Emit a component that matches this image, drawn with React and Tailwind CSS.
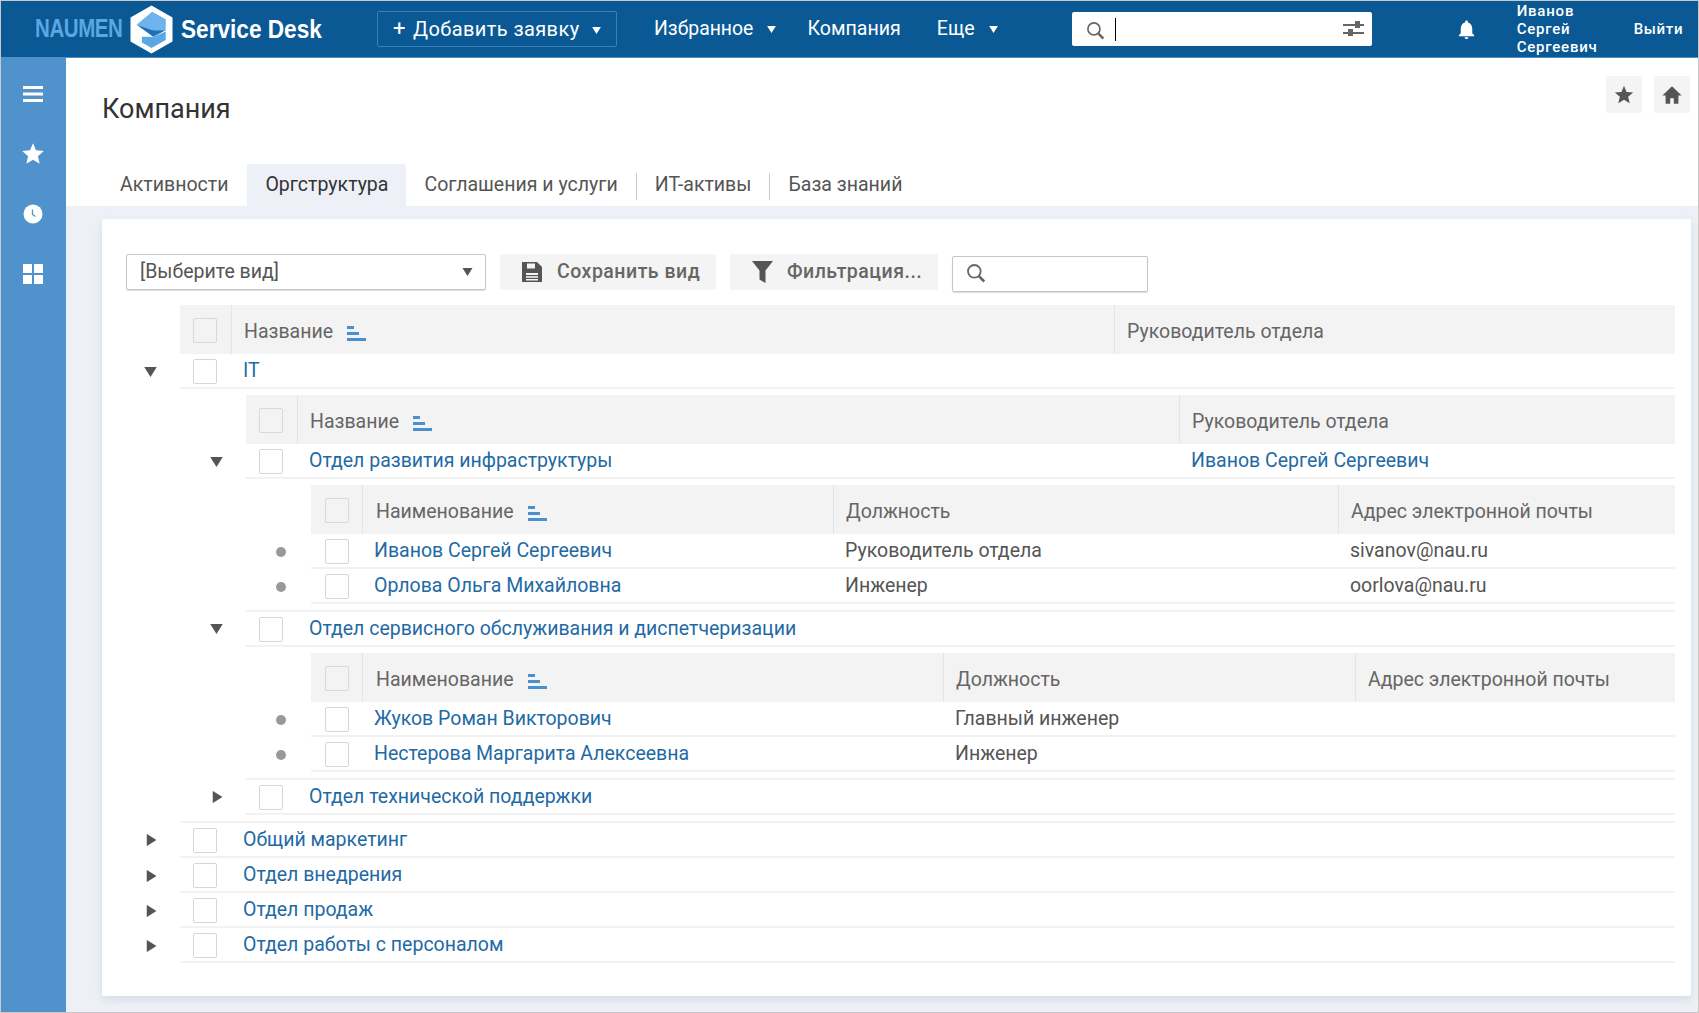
import React from 'react'

const StarIcon = ({ className }) => (
  <svg viewBox="0 0 24 24" className={className} fill="currentColor">
    <path d="M12 17.27 18.18 21l-1.64-7.03L22 9.24l-7.19-.61L12 2 9.19 8.63 2 9.24l5.46 4.73L5.82 21z" />
  </svg>
)

const SearchIcon = ({ className }) => (
  <svg viewBox="0 0 18 18" className={className} fill="none" stroke="#666" strokeWidth="1.6">
    <circle cx="7.5" cy="7.5" r="5.7" />
    <path d="M11.6 11.8 16.4 16.6" strokeWidth="2.4" />
  </svg>
)

const Caret = ({ className }) => (
  <svg viewBox="0 0 10 8" className={className} fill="currentColor">
    <path d="M0 0h10L5 8z" />
  </svg>
)

const Logo = () => (
  <svg viewBox="30 12 130 148" className="w-[43px] h-[49px] shrink-0">
    <polygon points="95,16 156,51 156,121 95,156 34,121 34,51" fill="#fff" stroke="#fff" strokeWidth="5" strokeLinejoin="round" />
    <polygon points="50,72 97,32 138,55 138,88 100,88" fill="#6db3ec" />
    <polygon points="50,72 100,88 138,88 100,108" fill="#1c70b8" />
    <polygon points="66,108 100,108 138,92 138,118 95,142 66,125" fill="#5ba7e4" />
  </svg>
)

const SortIcon = () => (
  <span className="flex flex-col gap-[3px] w-[19px] ml-[14px] mt-[3px] shrink-0">
    <span className="block h-[3px] w-[7px] bg-[#4a90d0]"></span>
    <span className="block h-[3px] w-[12px] bg-[#4a90d0]"></span>
    <span className="block h-[3px] w-[19px] bg-[#4a90d0]"></span>
  </span>
)

const Checkbox = () => (
  <span className="block w-[24px] h-[25px] rounded-[2px] border border-[#d6d6d6] bg-white"></span>
)

const HeaderCheckbox = () => (
  <span className="block w-[24px] h-[25px] rounded-[2px] border border-[#d9d9d9] bg-[#f3f3f3]"></span>
)

const Link = ({ children }) => <span className="text-[#1f6aa5] whitespace-nowrap">{children}</span>

const TableHead = ({ cols, deep }) => (
  <div className="flex h-[49px] bg-[#f3f3f3] text-[#666]">
    <div className={deep ? 'w-[51px] shrink-0 pl-[14px] pt-[13px]' : 'w-[51px] shrink-0 pl-[13px] pt-[13px]'}>
      <HeaderCheckbox />
    </div>
    {cols.map((c, i) => (
      <div key={c.label} className={`${c.w} flex items-center pl-[12px] pt-[4px] border-l border-[#e4e4e4]`}>
        <span className={deep && i === 0 ? 'whitespace-nowrap ml-[1px]' : 'whitespace-nowrap'}>{c.label}</span>
        {i === 0 && <SortIcon />}
      </div>
    ))}
  </div>
)

const Row = ({ icon, cols, cells, top, deep, gutter = 'w-[66px]' }) => (
  <div className="flex">
    <div className={`${gutter} shrink-0 pl-[30px] flex items-center`}>
      {icon === 'open' && <Caret className="w-[13px] h-[10px] text-[#555]" />}
      {icon === 'closed' && <Caret className="w-[13px] h-[10px] ml-[1px] text-[#555] -rotate-90" />}
      {icon === 'dot' && (
        <span className="w-[12px] -ml-[1px] flex justify-center">
          <span className="block w-[10px] h-[10px] rounded-full bg-[#999]"></span>
        </span>
      )}
    </div>
    <div className={top ? 'flex-1 flex h-[37px] border-t-2 border-b-2 border-[#f2f2f2]' : 'flex-1 flex h-[35px] border-b-2 border-[#f2f2f2]'}>
      <div className={deep ? 'w-[51px] shrink-0 pl-[14px] pt-[5px]' : 'w-[51px] shrink-0 pl-[13px] pt-[5px]'}>
        <Checkbox />
      </div>
      {cols.map((c, i) => (
        <div key={c.label} className={`${c.w} flex items-center pl-[12px] pt-[1px] text-[#555]`}>
          {cells[i]}
        </div>
      ))}
    </div>
  </div>
)

const rootCols = [
  { label: 'Название', w: 'w-[883px]' },
  { label: 'Руководитель отдела', w: 'flex-1' },
]
const midCols = [
  { label: 'Название', w: 'w-[882px]' },
  { label: 'Руководитель отдела', w: 'flex-1' },
]
const staffColsA = [
  { label: 'Наименование', w: 'w-[471px]' },
  { label: 'Должность', w: 'w-[505px]' },
  { label: 'Адрес электронной почты', w: 'flex-1' },
]
const staffColsB = [
  { label: 'Наименование', w: 'w-[581px]' },
  { label: 'Должность', w: 'w-[412px]' },
  { label: 'Адрес электронной почты', w: 'flex-1' },
]

const Staff = ({ cols, rows }) => (
  <div className="flex pt-[6px] pb-[6px]">
    <div className="w-[66px] shrink-0"></div>
    <div className="flex-1 min-w-0">
      <div className="ml-[65px]">
        <TableHead deep cols={cols} />
      </div>
      {rows.map((r) => (
        <Row key={r[0]} deep gutter="w-[65px]" icon="dot" cols={cols} cells={[<Link>{r[0]}</Link>, r[1], r[2]]} />
      ))}
    </div>
  </div>
)

const OrgTree = () => (
  <div className="text-[19.5px]">
    <div className="ml-[66px]">
      <TableHead cols={rootCols} />
    </div>
    <Row icon="open" cols={rootCols} cells={[<Link>IT</Link>, '']} />
    <div className="flex pt-[6px] pb-[6px]">
      <div className="w-[66px] shrink-0"></div>
      <div className="flex-1 min-w-0">
        <div className="ml-[66px]">
          <TableHead cols={midCols} />
        </div>
        <Row
          icon="open"
          cols={midCols}
          cells={[<Link>Отдел развития инфраструктуры</Link>, <Link>Иванов Сергей Сергеевич</Link>]}
        />
        <Staff
          cols={staffColsA}
          rows={[
            ['Иванов Сергей Сергеевич', 'Руководитель отдела', 'sivanov@nau.ru'],
            ['Орлова Ольга Михайловна', 'Инженер', 'oorlova@nau.ru'],
          ]}
        />
        <Row top icon="open" cols={midCols} cells={[<Link>Отдел сервисного обслуживания и диспетчеризации</Link>, '']} />
        <Staff
          cols={staffColsB}
          rows={[
            ['Жуков Роман Викторович', 'Главный инженер', ''],
            ['Нестерова Маргарита Алексеевна', 'Инженер', ''],
          ]}
        />
        <Row top icon="closed" cols={midCols} cells={[<Link>Отдел технической поддержки</Link>, '']} />
      </div>
    </div>
    <Row top icon="closed" cols={rootCols} cells={[<Link>Общий маркетинг</Link>, '']} />
    <Row icon="closed" cols={rootCols} cells={[<Link>Отдел внедрения</Link>, '']} />
    <Row icon="closed" cols={rootCols} cells={[<Link>Отдел продаж</Link>, '']} />
    <Row icon="closed" cols={rootCols} cells={[<Link>Отдел работы с персоналом</Link>, '']} />
  </div>
)

const Header = () => (
  <header className="h-[57px] shrink-0 bg-[#0a5995] border-b border-[#4a92cc] flex items-center text-white">
    <div className="w-[111px] pl-[34px] shrink-0 whitespace-nowrap">
      <span className="block origin-left scale-x-[0.82] text-[#5ba7e0] text-[25px] font-bold tracking-[-0.5px]" style={{ fontFamily: '"Liberation Sans", sans-serif' }}>
        NAUMEN
      </span>
    </div>
    <div className="ml-[18px]">
      <Logo />
    </div>
    <div className="w-[142px] ml-[8px] shrink-0 whitespace-nowrap">
      <span className="block origin-left scale-x-[0.87] text-[26px] font-bold" style={{ fontFamily: '"Liberation Sans", sans-serif' }}>
        Service Desk
      </span>
    </div>
    <button className="ml-[54px] w-[240px] h-[36px] shrink-0 flex items-center pl-[15px] border border-[#3a80bb] rounded-[2px] text-[20px] tracking-[0.4px]">
      <span className="w-[20px] text-left text-[22px] leading-none">+</span>
      <span className="whitespace-nowrap -mt-[1px]">Добавить заявку</span>
      <Caret className="w-[9px] h-[7px] ml-[12px] mt-[2px]" />
    </button>
    <span className="ml-[37px] text-[19.4px] whitespace-nowrap">Избранное</span>
    <Caret className="w-[9px] h-[7px] ml-[14px] shrink-0" />
    <span className="ml-[31px] text-[19.6px] whitespace-nowrap">Компания</span>
    <span className="ml-[36px] text-[19.6px] whitespace-nowrap">Еще</span>
    <Caret className="w-[9px] h-[7px] ml-[14px] shrink-0" />
    <div className="ml-[74px] w-[300px] h-[34px] shrink-0 bg-white rounded-[2px] flex items-center pl-[14px] pr-[8px]">
      <SearchIcon className="w-[19px] h-[19px] mt-[3px] shrink-0" />
      <span className="block w-px h-[23px] bg-black ml-[10px]"></span>
      <svg viewBox="0 0 21 16" className="w-[21px] h-[16px] ml-auto" fill="#666">
        <rect x="0" y="3" width="21" height="2" />
        <rect x="12" y="0" width="5" height="7" />
        <rect x="0" y="11" width="21" height="2" />
        <rect x="5" y="8" width="5" height="7" />
      </svg>
    </div>
    <svg viewBox="0 0 24 24" className="w-[23px] h-[25px] ml-[83px] shrink-0" fill="currentColor">
      <path d="M12 22c1.1 0 2-.9 2-2h-4c0 1.1.9 2 2 2zm6-6v-5c0-3.07-1.64-5.64-4.5-6.32V4c0-.83-.67-1.5-1.5-1.5s-1.5.67-1.5 1.5v.68C7.63 5.36 6 7.92 6 11v5l-2 2v1h16v-1l-2-2z" />
    </svg>
    <div className="ml-[39px] w-[117px] shrink-0 text-[15px] leading-[18px] font-medium tracking-[0.8px]">
      Иванов
      <br />
      Сергей
      <br />
      Сергеевич
    </div>
    <span className="text-[15px] font-medium tracking-[0.7px]">Выйти</span>
  </header>
)

const Sidebar = () => (
  <aside className="w-[65px] shrink-0 bg-[#4f92cc] text-white flex flex-col items-center pt-[26px] pr-[2px] gap-[40px]">
    <svg viewBox="0 0 20 20" className="w-[20px] h-[20px]" fill="currentColor">
      <rect x="0" y="2" width="20" height="3" />
      <rect x="0" y="8.5" width="20" height="3" />
      <rect x="0" y="15" width="20" height="3" />
    </svg>
    <StarIcon className="w-[20px] h-[20px] scale-[1.3]" />
    <svg viewBox="0 0 20 20" className="w-[20px] h-[20px]">
      <circle cx="10" cy="10" r="9.5" fill="#fff" />
      <path d="M9.5 5.5v5l3 2" fill="none" stroke="#4f92cc" strokeWidth="1.3" />
    </svg>
    <svg viewBox="0 0 20 20" className="w-[20px] h-[20px]" fill="currentColor">
      <rect x="0" y="0" width="9" height="9" />
      <rect x="11" y="0" width="9" height="9" />
      <rect x="0" y="11" width="9" height="9" />
      <rect x="11" y="11" width="9" height="9" />
    </svg>
  </aside>
)

const Tabs = () => (
  <div className="flex h-[42px] pl-[36px] text-[19.55px] text-[#555]">
    <div className="pl-[18px] pr-[19px] flex items-center">Активности</div>
    <div className="px-[18px] flex items-center bg-[#edf1f7] text-[#333] rounded-t-[2px]">Оргструктура</div>
    <div className="px-[18px] flex items-center whitespace-nowrap">Соглашения и услуги</div>
    <div className="w-px h-[27px] mt-[9px] bg-[#ccc]"></div>
    <div className="px-[18px] flex items-center">ИТ-активы</div>
    <div className="w-px h-[27px] mt-[9px] bg-[#ccc]"></div>
    <div className="px-[18px] flex items-center whitespace-nowrap">База знаний</div>
  </div>
)

const Toolbar = () => (
  <div className="flex items-start ml-[12px] gap-[14px] text-[19.5px] text-[#666]">
    <div className="w-[360px] h-[36px] border border-[#c6c6c6] rounded-[2px] shadow-[0_1px_1px_#ddd] flex items-center pl-[13px] pr-[12px] text-[#555]">
      <span>[Выберите вид]</span>
      <Caret className="w-[11px] h-[8px] ml-auto text-[#555]" />
    </div>
    <button className="w-[216px] h-[36px] bg-[#f4f4f4] rounded-[2px] flex items-center pl-[22px] font-medium tracking-[0.5px]">
      <svg viewBox="0 0 20 20" className="w-[20px] h-[20px] shrink-0 mr-[15px]">
        <path d="M0 0h15l5 5v15H0z" fill="#555" />
        <rect x="5" y="1.5" width="8" height="5" fill="#f4f4f4" />
        <rect x="4" y="11" width="12" height="7.5" fill="#f4f4f4" />
        <rect x="4" y="13" width="12" height="1.2" fill="#555" />
        <rect x="4" y="15.8" width="12" height="1.2" fill="#555" />
      </svg>
      <span className="whitespace-nowrap">Сохранить вид</span>
    </button>
    <button className="w-[208px] h-[36px] bg-[#f4f4f4] rounded-[2px] flex items-center pl-[22px] font-medium tracking-[0.5px]">
      <svg viewBox="0 0 21 22" className="w-[21px] h-[22px] shrink-0 mr-[14px]" fill="#555">
        <path d="M0 0h21l-7.5 9.5V22l-6-3.5v-9z" />
      </svg>
      <span className="whitespace-nowrap">Фильтрация...</span>
    </button>
    <div className="w-[196px] h-[36px] mt-[2px] border border-[#c6c6c6] rounded-[2px] shadow-[0_1px_1px_#ddd] flex items-center pl-[13px]">
      <SearchIcon className="w-[20px] h-[20px] -mt-[2px]" />
    </div>
  </div>
)

const App = () => (
  <div className="h-[1013px] w-full border border-[#c8c8c8] flex flex-col overflow-hidden bg-white" style={{ fontFamily: 'Roboto, sans-serif' }}>
    <Header />
    <div className="flex flex-1 min-h-0">
      <Sidebar />
      <main className="flex-1 min-w-0 flex flex-col">
        <div className="h-[106px] shrink-0 flex items-start justify-between pl-[36px] pr-[8px]">
          <h1 className="pt-[35px] text-[27px] leading-[32px] text-[#333]">Компания</h1>
          <div className="flex gap-[12px] pt-[18px]">
            <button className="w-[36px] h-[37px] bg-[#f4f4f4] rounded-[2px] flex items-center justify-center text-[#555]">
              <StarIcon className="w-[22px] h-[22px]" />
            </button>
            <button className="w-[36px] h-[37px] bg-[#f4f4f4] rounded-[2px] flex items-center justify-center text-[#555]">
              <svg viewBox="0 0 24 24" className="w-[22px] h-[22px]" fill="currentColor">
                <path d="M12 2.5 1.5 12.5H5v9h5v-6h4v6h5v-9h3.5z" />
              </svg>
            </button>
          </div>
        </div>
        <Tabs />
        <div className="flex-1 bg-[#edf1f7] pt-[13px] pl-[36px] pr-[7px] pb-[16px] min-h-0">
          <section className="h-full bg-white rounded-[2px] shadow-[0_4px_10px_rgba(120,140,170,0.2)] pt-[35px] pl-[12px] pr-[16px]">
            <Toolbar />
            <div className="mt-[13px]">
              <OrgTree />
            </div>
          </section>
        </div>
      </main>
    </div>
  </div>
)

export default App
